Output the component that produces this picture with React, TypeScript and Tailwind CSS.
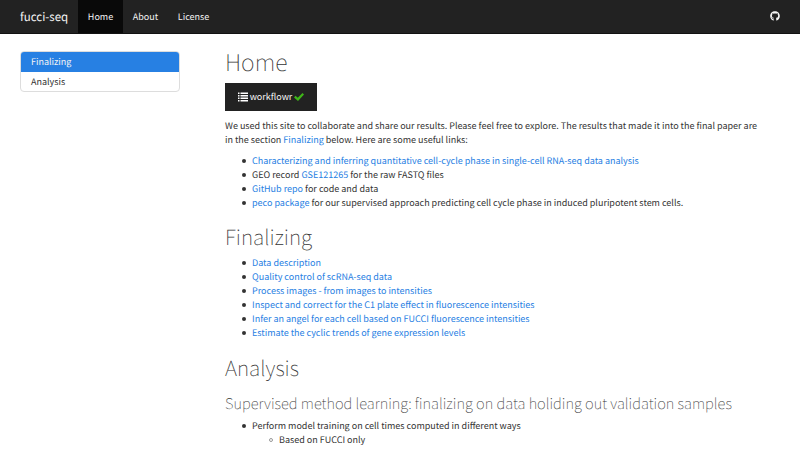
import React from 'react';
import { FaGithub } from 'react-icons/fa';

function Row({ children, hollow = false }: { children: React.ReactNode; hollow?: boolean }) {
  return (
    <li className="flex h-[14px] items-center whitespace-nowrap">
      <span
        className={
          hollow
            ? 'mr-[6px] h-[4px] w-[4px] rounded-full border border-[#999999]'
            : 'mr-[6px] h-[4px] w-[4px] rounded-full bg-[#333333]'
        }
      />
      <span>{children}</span>
    </li>
  );
}

function Link({ children }: { children: React.ReactNode }) {
  return <a href="#" className="text-[#2780e3]">{children}</a>;
}

function ListIcon() {
  return (
    <svg viewBox="0 0 20 20" className="h-[10px] w-[10px]" fill="#ffffff">
      <path d="M0 1h3v3H0zM5 1h15v3H5zM0 6h3v3H0zM5 6h15v3H5zM0 11h3v3H0zM5 11h15v3H5zM0 16h3v3H0zM5 16h15v3H5z" />
    </svg>
  );
}

function CheckIcon() {
  return (
    <svg viewBox="0 0 20 16" className="h-[8px] w-[10px]" fill="#3fb618">
      <path d="M17 0l3 3L8 16 0 9l3-3.500 4.500 4z" />
    </svg>
  );
}

export default function App() {
  return (
    <div className="h-[450px] w-[800px] overflow-hidden bg-white font-['Noto_Sans_CJK_SC','Noto_Sans',sans-serif] text-[9px] leading-[14px] text-[#333333] [text-rendering:geometricPrecision]">
      <nav className="flex h-[34px] items-stretch border-b border-[#121212] bg-[#222222] text-[#f4f4f4]">
        <div className="flex w-[78px] items-center pl-5 text-[11.500px]">fucci-seq</div>
        <div className="flex w-[45px] items-center justify-center bg-[#090909]">Home</div>
        <div className="flex w-[45px] items-center justify-center">About</div>
        <div className="flex w-[51px] items-center justify-center">License</div>
        <div className="ml-auto flex items-center pb-px pr-5">
          <FaGithub className="h-[10px] w-[10px]" />
        </div>
      </nav>
      <div className="flex">
        <aside className="w-[225px] pl-5 pt-[17px]">
          <div className="h-[41px] w-[160px] overflow-hidden rounded-[4px] border border-[#dddddd]">
            <div className="flex h-[20px] items-center bg-[#2780e3] pb-px pl-[10px] text-[#f4f4f4]">Finalizing</div>
            <div className="flex h-[19px] items-center pl-[10px]">Analysis</div>
          </div>
        </aside>
        <main className="w-[550px] whitespace-nowrap">
          <h1 className="mt-[12px] h-[30px] text-[23.100px] font-thin leading-[30px]">Home</h1>
          <div className="mt-[7px] flex h-[28px] w-[92px] items-center justify-center gap-[2px] bg-[#222222] text-[#f4f4f4]">
            <ListIcon />
            <span>workflowr</span>
            <CheckIcon />
          </div>
          <p className="mt-[8px]">
            We used this site to collaborate and share our results. Please feel free to explore. The results that made it into the final paper are
            <br />
            in the section <Link>Finalizing</Link> below. Here are some useful links:
          </p>
          <ul className="mt-[7px] pl-[17px]">
            <Row><Link>Characterizing and inferring quantitative cell-cycle phase in single-cell RNA-seq data analysis</Link></Row>
            <Row>GEO record <Link>GSE121265</Link> for the raw FASTQ files</Row>
            <Row><Link>GitHub repo</Link> for code and data</Row>
            <Row><Link>peco package</Link> for our supervised approach predicting cell cycle phase in induced pluripotent stem cells.</Row>
          </ul>
          <h1 className="mt-[12px] h-[30px] text-[20.900px] font-thin leading-[30px]">Finalizing</h1>
          <ul className="mt-[4px] pl-[17px]">
            <Row><Link>Data description</Link></Row>
            <Row><Link>Quality control of scRNA-seq data</Link></Row>
            <Row><Link>Process images - from images to intensities</Link></Row>
            <Row><Link>Inspect and correct for the C1 plate effect in fluorescence intensities</Link></Row>
            <Row><Link>Infer an angel for each cell based on FUCCI fluorescence intensities</Link></Row>
            <Row><Link>Estimate the cyclic trends of gene expression levels</Link></Row>
          </ul>
          <h1 className="mt-[13px] h-[30px] text-[20.900px] font-thin leading-[30px]">Analysis</h1>
          <h2 className="mt-[10px] h-[22px] text-[14.740px] font-thin leading-[22px]">
            Supervised method learning: finalizing on data holiding out validation samples
          </h2>
          <ul className="mt-[4px] pl-[17px]">
            <Row>Perform model training on cell times computed in different ways</Row>
            <li className="pl-[27px]"><ul><Row hollow>Based on FUCCI only</Row></ul></li>
          </ul>
        </main>
      </div>
    </div>
  );
}
